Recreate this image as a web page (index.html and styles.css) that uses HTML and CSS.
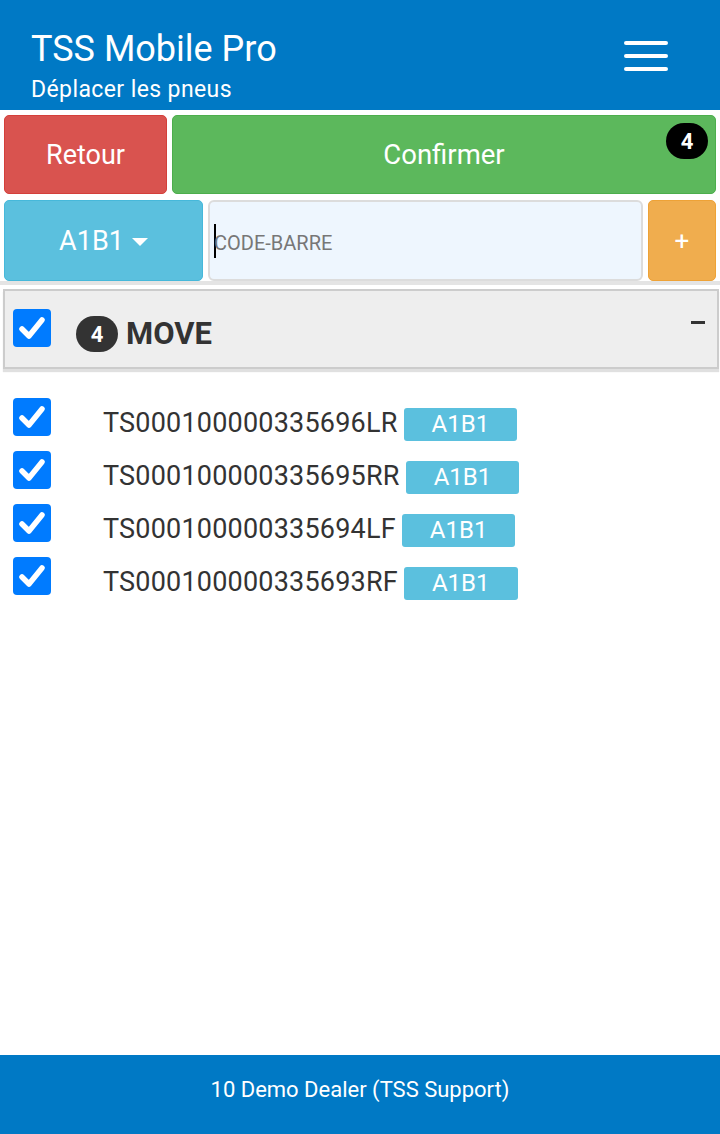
FILE: index.html
```html
<!DOCTYPE html>
<html lang="fr">
<head>
<meta charset="utf-8">
<title>TSS Mobile Pro</title>
<link rel="stylesheet" href="styles.css">
</head>
<body>
<div class="app">
  <header class="header">
    <div class="titles">
      <div class="title">TSS Mobile Pro</div>
      <div class="subtitle">Déplacer les pneus</div>
    </div>
    <div class="burger"><span></span><span></span><span></span></div>
  </header>

  <div class="actions">
    <div class="btn btn-red retour">Retour</div>
    <div class="btn btn-green confirmer">Confirmer<span class="badge badge-black">4</span></div>
  </div>

  <div class="scanrow">
    <div class="btn btn-cyan loc">A1B1 <span class="caret"></span></div>
    <div class="input"><span class="cursor"></span><span class="placeholder">CODE-BARRE</span></div>
    <div class="btn btn-orange plus">+</div>
  </div>

  <div class="sep"></div>

  <div class="panel">
    <div class="check big"><svg viewBox="0 0 38 38"><path d="M9 20 L16 27 L29 11" fill="none" stroke="#fff" stroke-width="5.5" stroke-linecap="round" stroke-linejoin="round"/></svg></div>
    <span class="badge badge-dark">4</span>
    <span class="move">MOVE</span>
    <span class="minus"></span>
  </div>

  <ul class="list">
    <li class="item"><div class="check"><svg viewBox="0 0 38 38"><path d="M9 20 L16 27 L29 11" fill="none" stroke="#fff" stroke-width="5.5" stroke-linecap="round" stroke-linejoin="round"/></svg></div><span class="code">TS000100000335696LR</span> <span class="label">A1B1</span></li>
    <li class="item"><div class="check"><svg viewBox="0 0 38 38"><path d="M9 20 L16 27 L29 11" fill="none" stroke="#fff" stroke-width="5.5" stroke-linecap="round" stroke-linejoin="round"/></svg></div><span class="code">TS000100000335695RR</span> <span class="label">A1B1</span></li>
    <li class="item"><div class="check"><svg viewBox="0 0 38 38"><path d="M9 20 L16 27 L29 11" fill="none" stroke="#fff" stroke-width="5.5" stroke-linecap="round" stroke-linejoin="round"/></svg></div><span class="code">TS000100000335694LF</span> <span class="label">A1B1</span></li>
    <li class="item"><div class="check"><svg viewBox="0 0 38 38"><path d="M9 20 L16 27 L29 11" fill="none" stroke="#fff" stroke-width="5.5" stroke-linecap="round" stroke-linejoin="round"/></svg></div><span class="code">TS000100000335693RF</span> <span class="label">A1B1</span></li>
  </ul>

  <footer class="footer">10 Demo Dealer (TSS Support)</footer>
</div>
</body>
</html>
```

FILE: styles.css
```css
* { box-sizing: border-box; }
html, body { margin: 0; padding: 0; }
body {
  font-family: Roboto, "Liberation Sans", sans-serif;
  color: #333;
  background: #fff;
}
.app {
  height: 1134px;
  display: flex;
  flex-direction: column;
}
.header {
  background: #0079c5;
  color: #fff;
  height: 110px;
  display: flex;
  justify-content: space-between;
  padding: 28px 52px 0 31px;
}
.title {
  font-size: 36px;
  line-height: 42px;
}
.subtitle {
  font-size: 23px;
  line-height: 26px;
  margin-top: 7px;
  letter-spacing: 0.4px;
}
.burger {
  display: flex;
  flex-direction: column;
  gap: 9px;
  padding-top: 13px;
}
.burger span {
  display: block;
  width: 44px;
  height: 4px;
  border-radius: 2px;
  background: #fff;
}
.actions {
  display: flex;
  gap: 5px;
  padding: 5px 4px 0;
  height: 84px;
}
.btn {
  display: flex;
  align-items: center;
  justify-content: center;
  border-radius: 5px;
  color: #fff;
  border: 1px solid transparent;
}
.btn-red { background: #d9534f; border-color: #d43f3a; }
.btn-green { background: #5cb85c; border-color: #4cae4c; }
.btn-cyan { background: #5bc0de; border-color: #46b8da; }
.btn-orange { background: #f0ad4e; border-color: #eea236; }
.retour { width: 163px; font-size: 27px; }
.confirmer { flex: 1; font-size: 27.5px; position: relative; }
.badge {
  display: inline-flex;
  align-items: center;
  justify-content: center;
  color: #fff;
  font-weight: bold;
  font-size: 22px;
  width: 42px;
  height: 36px;
  border-radius: 18px;
}
.badge-black {
  background: #000;
  position: absolute;
  right: 7px;
  top: 7px;
}
.scanrow {
  display: flex;
  gap: 5px;
  padding: 6px 4px 0;
  height: 87px;
}
.loc { width: 199px; font-size: 27px; gap: 8px; }
.caret {
  width: 0; height: 0;
  border-left: 8px solid transparent;
  border-right: 8px solid transparent;
  border-top: 8px solid #fff;
  margin-top: 3px;
}
.input {
  flex: 1;
  background: #eef6fe;
  border: 2px solid #dcdcdc;
  border-radius: 6px;
  display: flex;
  align-items: center;
  padding-left: 4px;
}
.cursor {
  width: 2px; height: 34px; background: #000; margin-right: -2px;
}
.placeholder {
  font-size: 20px;
  color: #777;
  margin-top: 4px;
}
.plus { width: 68px; font-size: 26px; }
.sep {
  height: 4px;
  background: #e4e4e4;
  margin-top: 0;
}
.panel {
  margin: 4px 1px 0 3px;
  height: 80px;
  background: #eeeeee;
  border: 2px solid #cccccc;
  box-shadow: 0 3px 1px #e0e0e0;
  display: flex;
  align-items: center;
  padding-left: 8px;
  position: relative;
}
.check {
  width: 38px;
  height: 38px;
  background: #007bff;
  border-radius: 4px;
  flex: none;
}
.check svg { display: block; width: 38px; height: 38px; }
.panel .check { margin-top: -3px; }
.badge-dark {
  background: #333;
  margin-left: 25px;
  margin-top: 10px;
}
.move {
  font-size: 31px;
  font-weight: bold;
  margin-left: 8px;
  margin-top: 8px;
  color: #333;
}
.minus {
  position: absolute;
  right: 12px;
  top: 30px;
  width: 14px;
  height: 3px;
  background: #333;
}
.list {
  list-style: none;
  margin: 0;
  padding: 29px 0 0 13px;
  flex: 1;
}
.item {
  height: 53px;
  display: flex;
  align-items: flex-start;
}
.code {
  font-size: 27px;
  margin-left: 52px;
  margin-top: 9px;
  line-height: 32px;
  letter-spacing: 0.2px;
}
.label {
  background: #5bc0de;
  color: #fff;
  font-size: 24px;
  line-height: 33px;
  height: 33px;
  padding: 0 28px;
  border-radius: 3px;
  margin-left: 6px;
  margin-top: 10px;
}
.footer {
  background: #0079c5;
  color: #fff;
  height: 79px;
  display: flex;
  align-items: center;
  justify-content: center;
  font-size: 22px;
  padding-bottom: 10px;
}
```
